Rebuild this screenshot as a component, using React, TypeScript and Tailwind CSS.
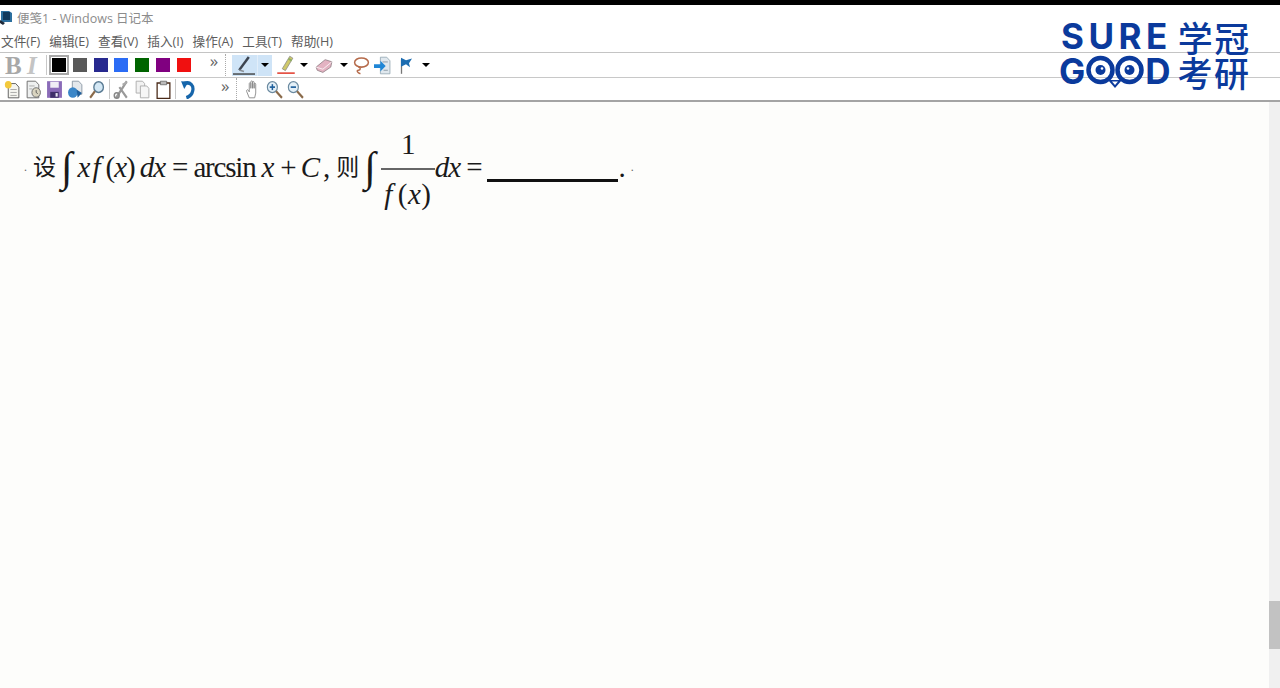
import type { ReactNode } from 'react'

const UI_FONT = "font-['Open_Sans','Noto_Sans_CJK_SC',sans-serif]"
const CJK_SERIF = "font-['Liberation_Serif','Noto_Sans_CJK_SC',serif]"

const MENUS = ['文件(F)', '编辑(E)', '查看(V)', '插入(I)', '操作(A)', '工具(T)', '帮助(H)']
const SWATCHES = ['bg-[#000000]', 'bg-[#595959]', 'bg-[#27298f]', 'bg-[#2b6cf5]', 'bg-[#006400]', 'bg-[#800080]', 'bg-[#f01010]']

function Icon({ children, className = 'w-[17px] h-[19px]' }: { children: ReactNode; className?: string }) {
  return (
    <svg viewBox="0 0 16 16" preserveAspectRatio="none" className={`${className} shrink-0`} fill="none">
      {children}
    </svg>
  )
}

function Caret() {
  return <span className="block w-0 h-0 border-x-[4px] border-x-transparent border-t-[4px] border-t-black" />
}

function Chevrons({ className }: { className: string }) {
  return <span className={`${UI_FONT} block text-[17px] leading-none text-[#666] ${className}`}>»</span>
}

function DotSep() {
  return <span className="block w-0 h-[22px] border-l border-dotted border-[#aaa]" />
}

function Sep() {
  return <span className="block w-px h-[20px] bg-[#c8c8c8]" />
}

function AppIcon() {
  return (
    <svg viewBox="0 0 14 16" className="w-[14px] h-[18px] shrink-0">
      <path d="M1 1h8l3 2v9H4l-3 2z" fill="#2c6f9e" />
      <path d="M3 2h7v8H3z" fill="#123a5c" />
      <path d="M0 10l5 3-2 2-3-2z" fill="#1f2a38" />
    </svg>
  )
}

function PenIcon() {
  return (
    <Icon className="w-[22px] h-[21px]">
      <path d="M4.500 11.500L11.500 1.500" stroke="#3c4450" strokeWidth="1.800" />
      <path d="M4.500 11.500L8 12.500" stroke="#8a8f96" strokeWidth="1.200" />
      <path d="M0 14.500h16" stroke="#333" strokeWidth="1" />
    </Icon>
  )
}

function MarkerIcon() {
  return (
    <Icon className="w-[20px] h-[20px]">
      <path d="M5 11L11 1l2.500 1.500-6 10z" fill="#cfc86a" stroke="#888" strokeWidth=".6" />
      <path d="M10 3l2.500 1.500" stroke="#8fb060" strokeWidth="1.500" />
      <path d="M1 14.500h14" stroke="#e4483a" strokeWidth="1.300" />
    </Icon>
  )
}

function EraserIcon() {
  return (
    <Icon className="w-[18px] h-[17px]">
      <path d="M1 9.500l8-7 6 2-1 5-7 5-5-2z" fill="#e3b3c2" stroke="#8a7a80" strokeWidth=".7" />
      <path d="M1 9.500l6 2 8-7" stroke="#fff" strokeWidth=".7" />
    </Icon>
  )
}

function LassoIcon() {
  return (
    <Icon className="w-[17px] h-[19px]">
      <ellipse cx="8" cy="5.500" rx="6.500" ry="3.800" stroke="#b56a4a" strokeWidth="1.400" />
      <path d="M5 9c3 1 2 3 0 3s-1 2 2 3" stroke="#b56a4a" strokeWidth="1.300" />
    </Icon>
  )
}

function InsertIcon() {
  return (
    <Icon className="w-[17px] h-[19px]">
      <path d="M6 1h6l3 3v11H6z" fill="#e0e8ee" stroke="#8fa3b0" strokeWidth=".7" />
      <path d="M8 5h5M9 12h4" stroke="#7a8a98" strokeWidth=".7" />
      <path d="M0 7h6V4l5 4.500-5 4.500v-3H0z" fill="#1f86d6" />
    </Icon>
  )
}

function FlagIcon() {
  return (
    <Icon className="w-[16px] h-[19px]">
      <path d="M3.500 3v12" stroke="#777" strokeWidth="1.300" />
      <path d="M3 1.500l5 2L14 2l-3 4 1 3.500-4-2.500-5 2z" fill="#1c6cb0" />
    </Icon>
  )
}

function NewIcon() {
  return (
    <Icon>
      <path d="M4 3h7l3 3v9H4z" fill="#f5f5f0" stroke="#555" strokeWidth=".8" />
      <path d="M6 8h6M6 10.500h6M6 13h6" stroke="#999" strokeWidth=".7" />
      <circle cx="4" cy="4" r="3.200" fill="#f3c93c" />
    </Icon>
  )
}

function TemplateIcon() {
  return (
    <Icon>
      <path d="M2 1h8l3 3v11H2z" fill="#eef0f0" stroke="#666" strokeWidth=".8" />
      <path d="M4 5h5M4 7.500h3" stroke="#999" strokeWidth=".7" />
      <circle cx="10.500" cy="10.500" r="4" fill="#d9d4c0" stroke="#666" strokeWidth=".8" />
      <path d="M10.500 8.500v2l1.500 1" stroke="#444" strokeWidth=".7" />
    </Icon>
  )
}

function SaveIcon() {
  return (
    <Icon>
      <path d="M1 1h14v14H1z" fill="#8a6bb8" />
      <path d="M4 1.500h8v5H4z" fill="#f0eef5" />
      <path d="M4 10h8v5H4z" fill="#3f2f6a" />
      <path d="M9 11h2v3H9z" fill="#e8e4f2" />
    </Icon>
  )
}

function ExportIcon() {
  return (
    <Icon>
      <path d="M5 1h6l3 3v8H5z" fill="#e4e8ec" stroke="#7a8a98" strokeWidth=".7" />
      <circle cx="5.500" cy="10.500" r="4.500" fill="#3a86c8" />
      <path d="M9 8l5 3-4 4z" fill="#1f5f9c" />
    </Icon>
  )
}

function FindIcon() {
  return (
    <Icon>
      <circle cx="10" cy="6" r="4.500" fill="#d4e8f5" stroke="#5b7c94" strokeWidth="1.300" />
      <path d="M6.500 9.500L2 15" stroke="#8a6a4a" strokeWidth="2" />
    </Icon>
  )
}

function ScissorsIcon() {
  return (
    <Icon>
      <path d="M3 15L13 1M13 15L6 6" stroke="#999" strokeWidth="2" />
      <circle cx="3.500" cy="13" r="2.300" stroke="#888" strokeWidth="1.400" />
      <path d="M13 2l-4 2" stroke="#aaa" strokeWidth="1.800" />
    </Icon>
  )
}

function CopyIcon() {
  return (
    <Icon>
      <path d="M2 1h6l2 2v8H2z" fill="#f2f2f2" stroke="#aaa" strokeWidth=".8" />
      <path d="M6 5h6l2 2v8H6z" fill="#f6f6f6" stroke="#aaa" strokeWidth=".8" />
    </Icon>
  )
}

function PasteIcon() {
  return (
    <Icon>
      <path d="M2 2.500h12V15.500H2z" fill="#fff" stroke="#4a2a18" strokeWidth="1.200" />
      <path d="M5 1h6v3H5z" fill="#bbb" stroke="#555" strokeWidth=".6" />
    </Icon>
  )
}

function UndoIcon() {
  return (
    <Icon>
      <path d="M4 3c6-2 9 2 8 6-.6 3-3 5-6 6" stroke="#1766ab" strokeWidth="3" />
      <path d="M1 1l7 .500-4 6z" fill="#1766ab" />
    </Icon>
  )
}

function HandIcon() {
  return (
    <Icon>
      <path
        d="M4 15L1.500 9.500c-.5-1 1-1.800 1.700-.8L4 10V3c0-1 1.500-1 1.500 0v4-5.500c0-1 1.600-1 1.600 0V7V2c0-1 1.500-1 1.500 0v5V3.500c0-1 1.500-1 1.500 0V11l-1 4z"
        fill="#fff"
        stroke="#888"
        strokeWidth=".8"
      />
    </Icon>
  )
}

function ZoomIcon({ plus }: { plus?: boolean }) {
  return (
    <Icon>
      <circle cx="6" cy="6" r="4.700" fill="#e4f0f8" stroke="#6b8aa0" strokeWidth="1.100" />
      <path d="M9.500 9.500L15 15" stroke="#8a6a4a" strokeWidth="2" />
      <path d="M3.500 6h5" stroke="#1f5f9c" strokeWidth="1.400" />
      {plus && <path d="M6 3.500v5" stroke="#1f5f9c" strokeWidth="1.400" />}
    </Icon>
  )
}

function OwlEyes() {
  return (
    <svg viewBox="0 0 60 34" className="w-[60px] h-[34px] shrink-0">
      <circle cx="15.500" cy="15" r="12" fill="none" stroke="#0b3a9c" strokeWidth="4.500" />
      <circle cx="44.500" cy="15" r="12" fill="none" stroke="#0b3a9c" strokeWidth="4.500" />
      <circle cx="15.500" cy="15" r="5" fill="#0b3a9c" />
      <circle cx="44.500" cy="15" r="5" fill="#0b3a9c" />
      <circle cx="17" cy="13.500" r="1.300" fill="#fff" />
      <circle cx="43" cy="13.500" r="1.300" fill="#fff" />
      <path d="M23 25h14l-7 8z" fill="#0b3a9c" />
      <path d="M27 26.500h6l-3 3.500z" fill="#fff" />
    </svg>
  )
}

function Logo() {
  return (
    <div className="absolute left-[1059px] top-[19px] w-[196px] flex flex-col text-[#0b3a9c] font-['Inter',sans-serif] font-bold">
      <div className="flex items-center h-[35px]">
        <span className="text-[35px] leading-none tracking-[4.500px] ml-[2px]">SURE</span>
        <span className="font-['Noto_Sans_CJK_SC',sans-serif] font-medium text-[35px] leading-none tracking-[1.500px] ml-[6px]">学冠</span>
      </div>
      <div className="flex items-center h-[35px]">
        <span className="text-[35px] leading-none">G</span>
        <OwlEyes />
        <span className="text-[35px] leading-none">D</span>
        <span className="font-['Noto_Sans_CJK_SC',sans-serif] font-medium text-[35px] leading-none tracking-[1.500px] ml-[7px]">考研</span>
      </div>
    </div>
  )
}

function Formula() {
  return (
    <div className={`${CJK_SERIF} flex items-center pl-[24px] h-[120px] text-[#1a1a1a] text-[29px] leading-none tracking-[-1px] whitespace-nowrap`}>
      <span className="text-[12px] mr-[7px] text-[#666]">.</span>
      <span className="text-[23px] tracking-normal">设</span>
      <span className="text-[42px] font-bold ml-[5px] mr-[6px]">∫</span>
      <span className="italic">x</span>
      <span className="italic ml-[3px]">f</span>
      <span className="ml-[6px]">(</span>
      <span className="italic">x</span>
      <span>)</span>
      <span className="italic ml-[5px]">dx</span>
      <span className="ml-[7px] mr-[6px]">=</span>
      <span className="tracking-[-1.200px]">arcsin</span>
      <span className="italic ml-[6px]">x</span>
      <span className="ml-[7px] mr-[5px]">+</span>
      <span className="italic">C</span>
      <span className="ml-[4px]">,</span>
      <span className="text-[23px] tracking-normal ml-[7px]">则</span>
      <span className="text-[42px] font-bold ml-[5px] mr-[6px]">∫</span>
      <span className="flex flex-col items-center w-[54px] mt-[5px]">
        <span className="pb-[9px]">1</span>
        <span className="block w-full h-[2px] bg-[#666]" />
        <span className="pt-[10px] tracking-[0.5px]">
          <span className="italic">f</span>
          <span className="ml-[5px]">(</span>
          <span className="italic">x</span>
          <span>)</span>
        </span>
      </span>
      <span className="italic">dx</span>
      <span className="ml-[6px] mr-[5px]">=</span>
      <span className="block w-[131px] h-[3px] bg-[#111] mt-[27px]" />
      <span className="ml-[1px]">.</span>
      <span className="text-[12px] ml-[6px] text-[#666]">.</span>
    </div>
  )
}

export default function App() {
  return (
    <div className={`${UI_FONT} relative w-[1280px] h-[688px] overflow-hidden bg-[#fdfdfb] flex flex-col`}>
      <div className="h-[5px] bg-black shrink-0" />

      {/* title */}
      <div className="h-[25px] flex items-center gap-[3px] pt-[1px] bg-white text-[12.500px] text-[#8c8c8c] shrink-0">
        <AppIcon />
        <span className="pt-[2px]">便笺1 - Windows 日记本</span>
      </div>

      {/* menu */}
      <div className="h-[23px] flex items-center gap-[9px] pl-px pt-[1px] bg-white text-[12.650px] text-[#5c5c5c] border-b border-[#c4c4c4] shrink-0">
        {MENUS.map((m) => (
          <span key={m}>{m}</span>
        ))}
      </div>

      {/* toolbar 1 */}
      <div className="h-[25px] flex items-center bg-white border-b border-[#c8c8c8] shrink-0">
        <span className="font-['Liberation_Serif',serif] font-bold text-[25px] leading-none text-[#a8a8a8] ml-[5px] w-[22px]">B</span>
        <span className="font-['Liberation_Serif',serif] font-bold italic text-[25px] leading-none text-[#c4c4c4] w-[19px]">I</span>
        <Sep />
        <div className="flex items-center gap-[6.800px] ml-[5px]">
          {SWATCHES.map((c, i) => (
            <span key={c} className={`block w-[14px] h-[14px] ${c} ${i === 0 ? 'outline-2 outline-[#a8a8a8] outline-offset-[1px]' : ''}`} />
          ))}
        </div>
        <span className="ml-[19px] w-[15px]">
          <Chevrons className="-mt-[9px]" />
        </span>
        <DotSep />
        <div className="ml-[6px] w-[40px] h-[21px] flex items-center bg-[#cfe4f7]">
          <span className="w-[26px] flex justify-center border-r border-[#e2eefa]">
            <PenIcon />
          </span>
          <span className="flex-1 flex justify-center">
            <Caret />
          </span>
        </div>
        <span className="ml-[4px]">
          <MarkerIcon />
        </span>
        <span className="ml-[4px]">
          <Caret />
        </span>
        <span className="ml-[7px]">
          <EraserIcon />
        </span>
        <span className="ml-[7px]">
          <Caret />
        </span>
        <span className="ml-[5px]">
          <LassoIcon />
        </span>
        <span className="ml-[4px]">
          <InsertIcon />
        </span>
        <span className="ml-[7px]">
          <FlagIcon />
        </span>
        <span className="ml-[8px]">
          <Caret />
        </span>
      </div>

      {/* toolbar 2 */}
      <div className="h-[24px] flex items-center bg-white border-b-2 border-[#a4a4a4] shrink-0">
        <div className="flex items-center gap-[4px] ml-[4px]">
          <NewIcon />
          <TemplateIcon />
          <SaveIcon />
          <ExportIcon />
          <FindIcon />
        </div>
        <span className="ml-[4px]">
          <Sep />
        </span>
        <div className="flex items-center gap-[4px] ml-[3px]">
          <ScissorsIcon />
          <CopyIcon />
          <PasteIcon />
        </div>
        <span className="ml-[3px]">
          <Sep />
        </span>
        <span className="ml-[4px]">
          <UndoIcon />
        </span>
        <span className="ml-[24px] w-[15px]">
          <Chevrons className="-mt-[7px]" />
        </span>
        <DotSep />
        <div className="flex items-center gap-[4px] ml-[8px]">
          <HandIcon />
          <ZoomIcon plus />
          <ZoomIcon />
        </div>
      </div>

      {/* page */}
      <div className="flex-1 flex min-h-0">
        <div className="flex-1 pt-[5px]">
          <Formula />
        </div>
        <div className="w-[11px] bg-[#f0f0f0] flex flex-col pt-[499px]">
          <div className="h-[48px] bg-[#c2c2c2]" />
        </div>
      </div>

      <Logo />
    </div>
  )
}
